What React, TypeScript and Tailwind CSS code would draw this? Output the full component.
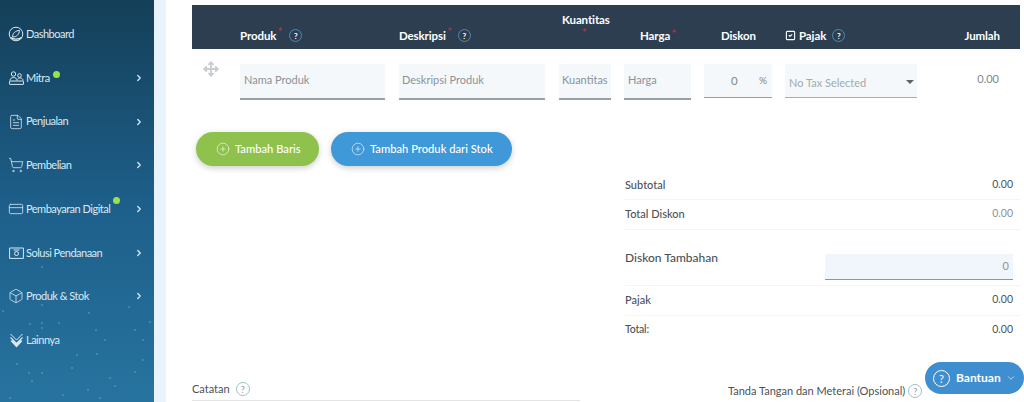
import { Box, ChevronDown, ChevronRight, CreditCard, FileText, ShoppingCart, SquareCheck, Move, CirclePlus } from "lucide-react";
import type { ReactNode } from "react";

const font = { fontFamily: "Lato, sans-serif" };

function DashIcon() {
  return (
    <svg width="16" height="16" viewBox="0 0 16 16" fill="none" stroke="currentColor">
      <circle cx="8" cy="8" r="6.8" strokeWidth="1" />
      <path d="M4.5 11c0-4 3-6.2 7-6.6-.3 4-2.6 6.6-7 6.6z" strokeWidth="1" />
      <path d="M2.5 11.5c2 2.2 9 2.2 11 0" strokeWidth="1.4" />
    </svg>
  );
}

function MitraIcon() {
  return (
    <svg width="15" height="14" viewBox="0 0 15 14" fill="none" stroke="currentColor" strokeWidth="1">
      <circle cx="4.5" cy="3" r="2.2" />
      <circle cx="10.5" cy="4.5" r="1.8" />
      <path d="M1 9.5c0-4 7-4 7 0M8.5 8c1-1.5 5.5-1.5 5.5 1.5" />
      <rect x="0.5" y="10" width="14" height="3.4" rx="0.5" />
    </svg>
  );
}

function FundIcon() {
  return (
    <svg width="15" height="12" viewBox="0 0 15 12" fill="none" stroke="currentColor" strokeWidth="1">
      <path d="M3 1H.6v10.4h13.8V1H12" />
      <circle cx="7.5" cy="6.5" r="2" />
      <path d="M3 1h9M4.5 3h6" />
    </svg>
  );
}

function MoreIcon() {
  return (
    <svg width="15" height="15" viewBox="0 0 15 15" fill="none" stroke="currentColor">
      <path d="M1.5 1l6 6 6-6" strokeWidth="1" />
      <path d="M1.5 4.5l6 6 6-6" strokeWidth="1.2" />
      <path d="M1.5 8l6 6.4 6-6.4-2-1-4 3.6-4-3.6z" fill="currentColor" stroke="none" />
    </svg>
  );
}

function Stars() {
  // scattered specks at the bottom of the sidebar
  const dots = [
    [42, 305], [89, 313], [3, 311], [129, 307], [30, 324], [42, 323], [59, 323], [96, 330], [135, 330],
    [42, 328], [105, 340], [18, 343], [77, 355], [97, 354], [143, 340], [17, 364], [29, 373], [42, 373],
    [110, 378], [32, 381], [88, 390], [115, 386], [63, 395], [10, 398], [135, 372], [150, 322], [72, 368],
    [42, 267], [143, 360], [100, 398],
  ];
  return (
    <svg className="absolute left-0 top-0 h-[402px] w-[154px]" viewBox="0 0 154 402">
      {dots.map(([x, y]) => (
        <circle key={`${x}-${y}`} cx={x} cy={y} r="0.7" fill="#ffffff" opacity="0.45" />
      ))}
    </svg>
  );
}

function NavItem({ icon, label, dotClass, arrow = true }: { icon: ReactNode; label: string; dotClass?: string; arrow?: boolean }) {
  return (
    <div className="flex h-[43.7px] items-center pl-[6px] pr-[10px] text-[#dbe9f3]">
      <span className="flex w-[20px] justify-center">{icon}</span>
      <span className="relative text-[11px] tracking-[-0.5px]">
        {label}
        {dotClass && <span className={`absolute right-[-10px] h-[7px] w-[7px] rounded-full bg-[#9be04f] ${dotClass}`} />}
      </span>
      {arrow && <ChevronRight size={10} strokeWidth={3} className="ml-auto text-[#dbe9f3]" />}
    </div>
  );
}

function Help({ dark }: { dark?: boolean }) {
  return (
    <span
      className={
        dark
          ? "inline-flex h-[13px] w-[13px] items-center justify-center rounded-full border border-[#4a8ab8] text-[8px] font-bold leading-none text-white"
          : "inline-flex h-[14px] w-[14px] items-center justify-center rounded-full border border-[#9cc3c0] text-[9px] leading-none text-[#8a9aa0]"
      }
    >
      ?
    </span>
  );
}

function Star() {
  return <span className="absolute right-[-6px] top-[-3px] text-[11px] font-bold text-[#a8324a]">*</span>;
}

function Field({ text, className }: { text: string; className: string }) {
  return (
    <div className={`flex h-[36px] items-center border-b-2 border-[#9a9fa3] bg-[#f4f8fb] pb-[2px] text-[11px] text-[#8b9298] ${className}`}>
      {text}
    </div>
  );
}

function SumRow({ label, value, light, last, labelClass = "text-[11px]", rowClass = "h-[29.5px]" }: { label: string; value: string; light?: boolean; last?: boolean; labelClass?: string; rowClass?: string }) {
  return (
    <div className={`flex items-center justify-between pr-[7px] text-[10.5px] ${rowClass} ${last ? "" : "border-b border-[#f3f4f5]"}`}>
      <span className={`font-medium text-[#4b5257] ${labelClass}`}>{label}</span>
      <span className={light ? "text-[#8b9298]" : "text-[#4b5257]"}>{value}</span>
    </div>
  );
}

export default function App() {
  return (
    <div className="relative flex h-[402px] w-[1024px] overflow-hidden bg-white" style={font}>
      {/* Sidebar */}
      <aside className="relative h-full w-[154px] shrink-0 bg-gradient-to-b from-[#143f58] via-[#1d5f8a] to-[#27739f] pt-[12.5px]">
        <Stars />
        <nav className="relative flex flex-col">
          <NavItem icon={<DashIcon />} label="Dashboard" arrow={false} />
          <NavItem icon={<MitraIcon />} label="Mitra" dotClass="top-[1px]" />
          <NavItem icon={<FileText size={16} strokeWidth={1.2} />} label="Penjualan" />
          <NavItem icon={<ShoppingCart size={16} strokeWidth={1.2} />} label="Pembelian" />
          <NavItem icon={<CreditCard size={16} strokeWidth={1.2} />} label="Pembayaran Digital" dotClass="top-[-4px]" />
          <NavItem icon={<FundIcon />} label="Solusi Pendanaan" />
          <NavItem icon={<Box size={16} strokeWidth={1.2} />} label="Produk & Stok" />
          <NavItem icon={<MoreIcon />} label="Lainnya" arrow={false} />
        </nav>
      </aside>
      <div className="w-[12px] shrink-0 bg-[#e8f3fb]" />

      {/* Main */}
      <main className="w-[858px] shrink-0 pl-[26px] pr-[4px] pt-[5px]">
        {/* Table header */}
        <div className="flex h-[44px] items-start bg-[#2c3e50] text-[11.5px] font-bold tracking-[-0.1px] text-white">
          <div className="ml-[48px] flex w-[159px] items-center gap-[13px] pt-[22px]">
            <span className="relative">Produk<Star /></span>
            <Help dark />
          </div>
          <div className="flex w-[160px] items-center gap-[12px] pt-[22px]">
            <span className="relative">Deskripsi<Star /></span>
            <Help dark />
          </div>
          <div className="relative w-[81px] pl-[3px] pt-[6px]">
            Kuantitas
            <span className="absolute left-[23px] top-[20px] text-[11px] text-[#a8324a]">*</span>
          </div>
          <div className="w-[81px] pt-[22px]">
            <span className="relative">Harga<Star /></span>
          </div>
          <div className="w-[64px] pt-[22px]">Diskon</div>
          <div className="flex items-center gap-[3px] pt-[22px]">
            <SquareCheck size={11} strokeWidth={2.4} />
            <span className="mr-[3px]">Pajak</span>
            <Help dark />
          </div>
          <div className="ml-auto pr-[20px] pt-[22px]">Jumlah</div>
        </div>

        {/* Item row */}
        <div className="mt-[15px] flex items-start">
          <div className="w-[48px] pl-[11px]">
            <Move size={16} strokeWidth={2.8} className="-mt-[3px] text-[#c7cdd2]" />
          </div>
          <Field text="Nama Produk" className="w-[145px] pl-[4px]" />
          <Field text="Deskripsi Produk" className="ml-[14px] w-[146px] pl-[3px]" />
          <Field text="Kuantitas" className="ml-[14px] w-[52px] pl-[3px]" />
          <Field text="Harga" className="ml-[13px] w-[67px] pl-[4px]" />
          <div className="ml-[13px] flex h-[34px] w-[68px] items-center justify-between border-b border-[#9a9fa3] bg-[#f4f8fb] pl-[27px] pr-[5px] text-[11px] text-[#7f868c]">
            <span className="text-[11.5px]">0</span>
            <span className="text-[10px]">%</span>
          </div>
          <div className="ml-[13px] flex h-[34px] w-[132px] items-center justify-between border-b border-[#a9aeb2] bg-[#f4f8fb] pl-[4px] pr-[3px] pt-[5px] text-[11px] text-[#a3a9ae]">
            <span>No Tax Selected</span>
            <span className="mb-[3px] h-0 w-0 border-x-[4px] border-t-[4px] border-x-transparent border-t-[#5c6368]" />
          </div>
          <div className="flex-1 pr-[21px] pt-[7px] text-right text-[11px] text-[#7f868c]">0.00</div>
        </div>

        {/* Buttons */}
        <div className="ml-[4px] mt-[32px] flex gap-[12px]">
          <button className="flex h-[34px] w-[123px] items-center rounded-full bg-[#8fc24c] pl-[20px] text-[11.2px] font-medium text-white shadow-[0_2px_6px_rgba(0,0,0,0.2)]">
            <CirclePlus size={14} strokeWidth={1} className="mr-[5px]" />
            Tambah Baris
          </button>
          <button className="flex h-[34px] w-[181px] items-center rounded-full bg-[#3f98d8] pl-[20px] text-[11.2px] font-medium text-white shadow-[0_2px_6px_rgba(0,0,0,0.2)]">
            <CirclePlus size={14} strokeWidth={1} className="mr-[5px]" />
            Tambah Produk dari Stok
          </button>
        </div>

        {/* Summary */}
        <div className="ml-[433px] mt-[5px] w-[395px]">
          <SumRow label="Subtotal" value="0.00" rowClass="h-[29px]" />
          <SumRow label="Total Diskon" value="0.00" light />
          <div className="flex h-[56.5px] justify-between border-b border-[#f3f4f5] pr-[7px] pt-[19px] text-[10.5px]">
            <span className="text-[12px] font-medium text-[#4b5257]">Diskon Tambahan</span>
            <div className="mt-[5px] flex h-[26px] w-[188px] items-center justify-end border-b border-[#8f969b] bg-[#f0f6fb] pr-[4px] text-[11px] text-[#8b9298]">
              0
            </div>
          </div>
          <SumRow label="Pajak" value="0.00" />
          <SumRow label="Total:" value="0.00" last labelClass="text-[10.5px] tracking-[-0.2px]" />
        </div>

        {/* Footer labels */}
        <div className="mt-[33px] flex items-start text-[11px] text-[#4b5257]">
          <div className="flex h-[23px] w-[388px] items-center gap-[6px] border-b border-[#e1e5e8]">
            Catatan <Help />
          </div>
          <div className="ml-[148px] mt-[5px] flex items-center gap-[3px]">
            Tanda Tangan dan Meterai (Opsional) <Help />
          </div>
        </div>
      </main>

      {/* Help bubble */}
      <button className="absolute left-[925px] top-[362px] flex h-[32px] w-[99px] items-center rounded-full bg-[#3f8fd0] pl-[8px] text-[12px] font-bold text-white">
        <span className="mr-[6px] flex h-[17px] w-[17px] items-center justify-center rounded-full border border-white text-[11px] font-normal leading-none">?</span>
        Bantuan
        <ChevronDown size={10} strokeWidth={1.5} className="ml-[5px]" />
      </button>
    </div>
  );
}
